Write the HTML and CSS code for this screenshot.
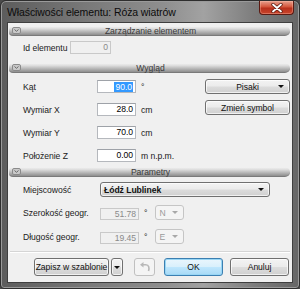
FILE: index.html
```html
<!DOCTYPE html>
<html lang="pl">
<head>
<meta charset="utf-8">
<link rel="stylesheet" href="styles.css">
</head>
<body>
<div class="window">
  <div class="titlebar">
    <span class="title">Właściwości elementu: Róża wiatrów</span>
    <div class="close">
      <svg width="12" height="10" viewBox="0 0 12 10"><path d="M2 1.5 L10 8.5 M10 1.5 L2 8.5" stroke="#5a1a10" stroke-width="3.4" stroke-linecap="round"/><path d="M2 1.5 L10 8.5 M10 1.5 L2 8.5" stroke="#fff" stroke-width="1.8" stroke-linecap="round"/></svg>
    </div>
  </div>
  <div class="client">
    <div class="sec-head">
      <span class="sec-icon"><svg width="9" height="7" viewBox="0 0 9 7"><rect x="0.5" y="0.5" width="8" height="6" rx="1.5" fill="#c9c9c9" stroke="#8a8a8a"/><path d="M2.5 2.5 L4.5 4.3 L6.5 2.5" fill="none" stroke="#6a6a6a" stroke-width="1"/></svg></span>
      <span class="sec-title">Zarządzanie elementem</span>
    </div>
    <div class="row row-id">
      <span class="lbl lbl-id">Id elementu</span>
      <span class="inp inp-id disabled">0</span>
    </div>

    <div class="sec-head sec-2">
      <span class="sec-icon"><svg width="9" height="7" viewBox="0 0 9 7"><rect x="0.5" y="0.5" width="8" height="6" rx="1.5" fill="#c9c9c9" stroke="#8a8a8a"/><path d="M2.5 2.5 L4.5 4.3 L6.5 2.5" fill="none" stroke="#6a6a6a" stroke-width="1"/></svg></span>
      <span class="sec-title">Wygląd</span>
    </div>
    <div class="look">
      <div class="fields">
        <div class="row">
          <span class="lbl lbl-w">Kąt</span>
          <span class="inp inp-w"><span class="sel">90.0</span></span>
          <span class="unit">°</span>
        </div>
        <div class="row">
          <span class="lbl lbl-w">Wymiar X</span>
          <span class="inp inp-w">28.0</span>
          <span class="unit">cm</span>
        </div>
        <div class="row">
          <span class="lbl lbl-w">Wymiar Y</span>
          <span class="inp inp-w">70.0</span>
          <span class="unit">cm</span>
        </div>
        <div class="row">
          <span class="lbl lbl-w">Położenie Z</span>
          <span class="inp inp-w">0.00</span>
          <span class="unit">m n.p.m.</span>
        </div>
      </div>
      <div class="side-btns">
        <div class="btn btn-side btn-drop"><span class="btn-text">Pisaki</span><span class="arrow"></span></div>
        <div class="btn btn-side">Zmień symbol</div>
      </div>
    </div>

    <div class="sec-head sec-3">
      <span class="sec-icon"><svg width="9" height="7" viewBox="0 0 9 7"><rect x="0.5" y="0.5" width="8" height="6" rx="1.5" fill="#c9c9c9" stroke="#8a8a8a"/><path d="M2.5 2.5 L4.5 4.3 L6.5 2.5" fill="none" stroke="#6a6a6a" stroke-width="1"/></svg></span>
      <span class="sec-title">Parametry</span>
    </div>
    <div class="params">
      <div class="row prow">
        <span class="lbl lbl-p">Miejscowość</span>
        <div class="combo combo-city"><span class="combo-text">Łódź Lublinek</span><span class="arrow"></span></div>
      </div>
      <div class="row prow prow-2">
        <span class="lbl lbl-p">Szerokość geogr.</span>
        <span class="inp inp-p disabled">51.78</span>
        <span class="unit unit-deg">°</span>
        <div class="combo combo-small disabled"><span class="combo-text">N</span><span class="arrow arrow-dis"></span></div>
      </div>
      <div class="row prow prow-3">
        <span class="lbl lbl-p">Długość geogr.</span>
        <span class="inp inp-p disabled">19.45</span>
        <span class="unit unit-deg">°</span>
        <div class="combo combo-small disabled"><span class="combo-text">E</span><span class="arrow arrow-dis"></span></div>
      </div>
    </div>

    <div class="sep"></div>

    <div class="footer">
      <div class="btn btn-save">Zapisz w szablonie</div>
      <div class="btn btn-arrow"><span class="arrow"></span></div>
      <div class="btn btn-undo disabled">
        <svg width="12" height="10" viewBox="0 0 12 10"><path d="M9.5 9 C10.5 6 10 2.8 6.8 2.8 L3.5 2.8" fill="none" stroke="#b8b8b8" stroke-width="1.6"/><path d="M1 2.8 L4.5 0 L4.5 5.6 Z" fill="#b8b8b8"/></svg>
      </div>
      <div class="btn btn-ok">OK</div>
      <div class="btn btn-cancel">Anuluj</div>
    </div>
  </div>
</div>
</body>
</html>
```

FILE: styles.css
```css
* { box-sizing: border-box; }
html, body {
  margin: 0;
  padding: 0;
  width: 300px;
  height: 289px;
  overflow: hidden;
  background: #4a4a4a;
  font-family: "Liberation Sans", Arial, sans-serif;
  font-size: 8.6px;
  letter-spacing: -0.05px;
  color: #000;
  white-space: nowrap;
}
.window {
  width: 300px;
  height: 289px;
  border: 1px solid #2e2e2e;
  border-radius: 6px 6px 4px 4px;
  background: linear-gradient(90deg, #5c5c5c 0%, #7a7a7a 30%, #8f8f8f 55%, #a2a2a2 68%, #7d7d7d 85%, #666 100%);
  padding: 0 6px 5px 6px;
  display: flex;
  flex-direction: column;
  box-shadow: inset 0 0 0 1px #9a9a9a;
}
.titlebar {
  height: 21px;
  flex: none;
  display: flex;
  align-items: flex-start;
  justify-content: space-between;
}
.title {
  margin-top: 5px;
  font-size: 10.5px;
  color: #0c0c0c;
  letter-spacing: -0.1px;
}
.close {
  width: 35px;
  height: 14px;
  margin-right: -1px;
  border: 1px solid #5b1a12;
  border-top: none;
  border-radius: 0 0 4px 4px;
  background: linear-gradient(180deg, #e8a08e 0%, #d4553b 45%, #b8301c 55%, #c9452c 100%);
  display: flex;
  align-items: center;
  justify-content: center;
  box-shadow: inset 0 0 0 1px rgba(255,200,180,0.35);
}
.client {
  flex: 1;
  background: #f0f0f0;
  border: 1px solid #3f3f3f;
  padding: 3px 2px 0 1px;
  display: flex;
  flex-direction: column;
}
.sec-head {
  height: 10px;
  flex: none;
  position: relative;
  display: flex;
  align-items: center;
  justify-content: center;
  border-radius: 4px 5px 5px 4px;
  background: linear-gradient(180deg, #f4f4f4 0%, #dcdcdc 30%, #b4b4b4 65%, #8e8e8e 100%);
  border-bottom: 1px solid #7a7a7a;
}
.sec-icon {
  position: absolute;
  left: 3px;
  top: 1px;
  display: flex;
}
.sec-title {
  color: #3a3a3a;
  line-height: 10px;
  margin-left: 2px;
}
.sec-2 { margin-top: 9px; }
.sec-3 { margin-top: 5px; }
.row {
  display: flex;
  align-items: center;
  padding-left: 14px;
}
.row-id { margin-top: 5px; height: 13px; }
.lbl { flex: none; color: #1a1a1a; }
.lbl-id { width: 47px; }
.lbl-w { width: 74px; }
.lbl-p { width: 77px; }
.inp {
  flex: none;
  height: 13px;
  background: #fff;
  border: 1px solid #b5b8bd;
  border-top-color: #9ea2a8;
  padding-right: 2px;
  line-height: 11px;
  display: flex;
  justify-content: flex-end;
  align-items: center;
}
.inp.disabled {
  background: #f0f0f0;
  border-color: #c9c9c9;
  color: #8a8a8a;
}
.inp-id { width: 41px; }
.inp-w { width: 39px; }
.inp-p { width: 39px; height: 12px; }
.sel {
  background: #3399ff;
  color: #fff;
  padding: 0 1px;
  line-height: 10px;
}
.unit { margin-left: 5px; color: #1a1a1a; }
.look {
  display: flex;
  margin-top: 6px;
}
.fields {
  flex: 1;
  padding-top: 1px;
  display: flex;
  flex-direction: column;
  gap: 10px;
}
.fields .row { height: 13px; }
.side-btns {
  width: 85px;
  display: flex;
  flex-direction: column;
  gap: 6px;
}
.btn {
  border: 1px solid #707070;
  border-radius: 3px;
  background: linear-gradient(180deg, #f3f3f3 0%, #ebebeb 48%, #dcdcdc 52%, #d0d0d0 100%);
  display: flex;
  align-items: center;
  justify-content: center;
  color: #111;
  box-shadow: inset 0 0 0 1px rgba(255,255,255,0.7);
}
.btn-side { height: 15px; }
.btn-drop { position: relative; }
.btn-drop .arrow { position: absolute; right: 5px; top: 5px; }
.arrow {
  width: 0;
  height: 0;
  border-left: 3px solid transparent;
  border-right: 3px solid transparent;
  border-top: 3px solid #111;
}
.arrow-dis { border-top-color: #a8a8a8; }
.params { margin-top: 5px; display: flex; flex-direction: column; }
.prow { height: 15px; }
.prow-2 { margin-top: 8px; }
.prow-3 { margin-top: 9px; }
.prow-2 .inp, .prow-3 .inp { align-self: flex-end; }
.combo {
  height: 15px;
  border: 1px solid #707070;
  border-radius: 3px;
  background: linear-gradient(180deg, #f3f3f3 0%, #ebebeb 48%, #dcdcdc 52%, #d0d0d0 100%);
  display: flex;
  align-items: center;
  justify-content: space-between;
  padding: 0 5px 0 3px;
  box-shadow: inset 0 0 0 1px rgba(255,255,255,0.7);
}
.combo-city { width: 170px; }
.combo-city .combo-text { font-weight: bold; color: #111; }
.combo-small {
  width: 29px;
  margin-left: 8px;
}
.combo.disabled {
  background: #f4f4f4;
  border-color: #c5c5c5;
  color: #9a9a9a;
  box-shadow: none;
}
.sep {
  margin-top: 7px;
  height: 2px;
  border-top: 1px solid #d5d5d5;
  border-bottom: 1px solid #fff;
  margin-left: 1px;
}
.footer {
  display: flex;
  align-items: center;
  margin-top: 5px;
  height: 18px;
  padding-left: 25px;
}
.footer .btn { height: 18px; }
.btn-save { width: 75px; }
.btn-arrow { width: 12px; margin-left: 2px; }
.btn-undo { width: 21px; margin-left: 11px; }
.btn.disabled {
  border-color: #c0c0c0;
  background: #f4f4f4;
  box-shadow: none;
}
.btn-ok {
  width: 59px;
  margin-left: 9px;
  border-color: #3c7fb1;
  background: linear-gradient(180deg, #eaf6fd 0%, #d9f0fc 48%, #bee6fd 52%, #a7d9f5 100%);
  box-shadow: inset 0 0 0 1px #98d6f5;
}
.btn-cancel { width: 59px; margin-left: 7px; }
```
